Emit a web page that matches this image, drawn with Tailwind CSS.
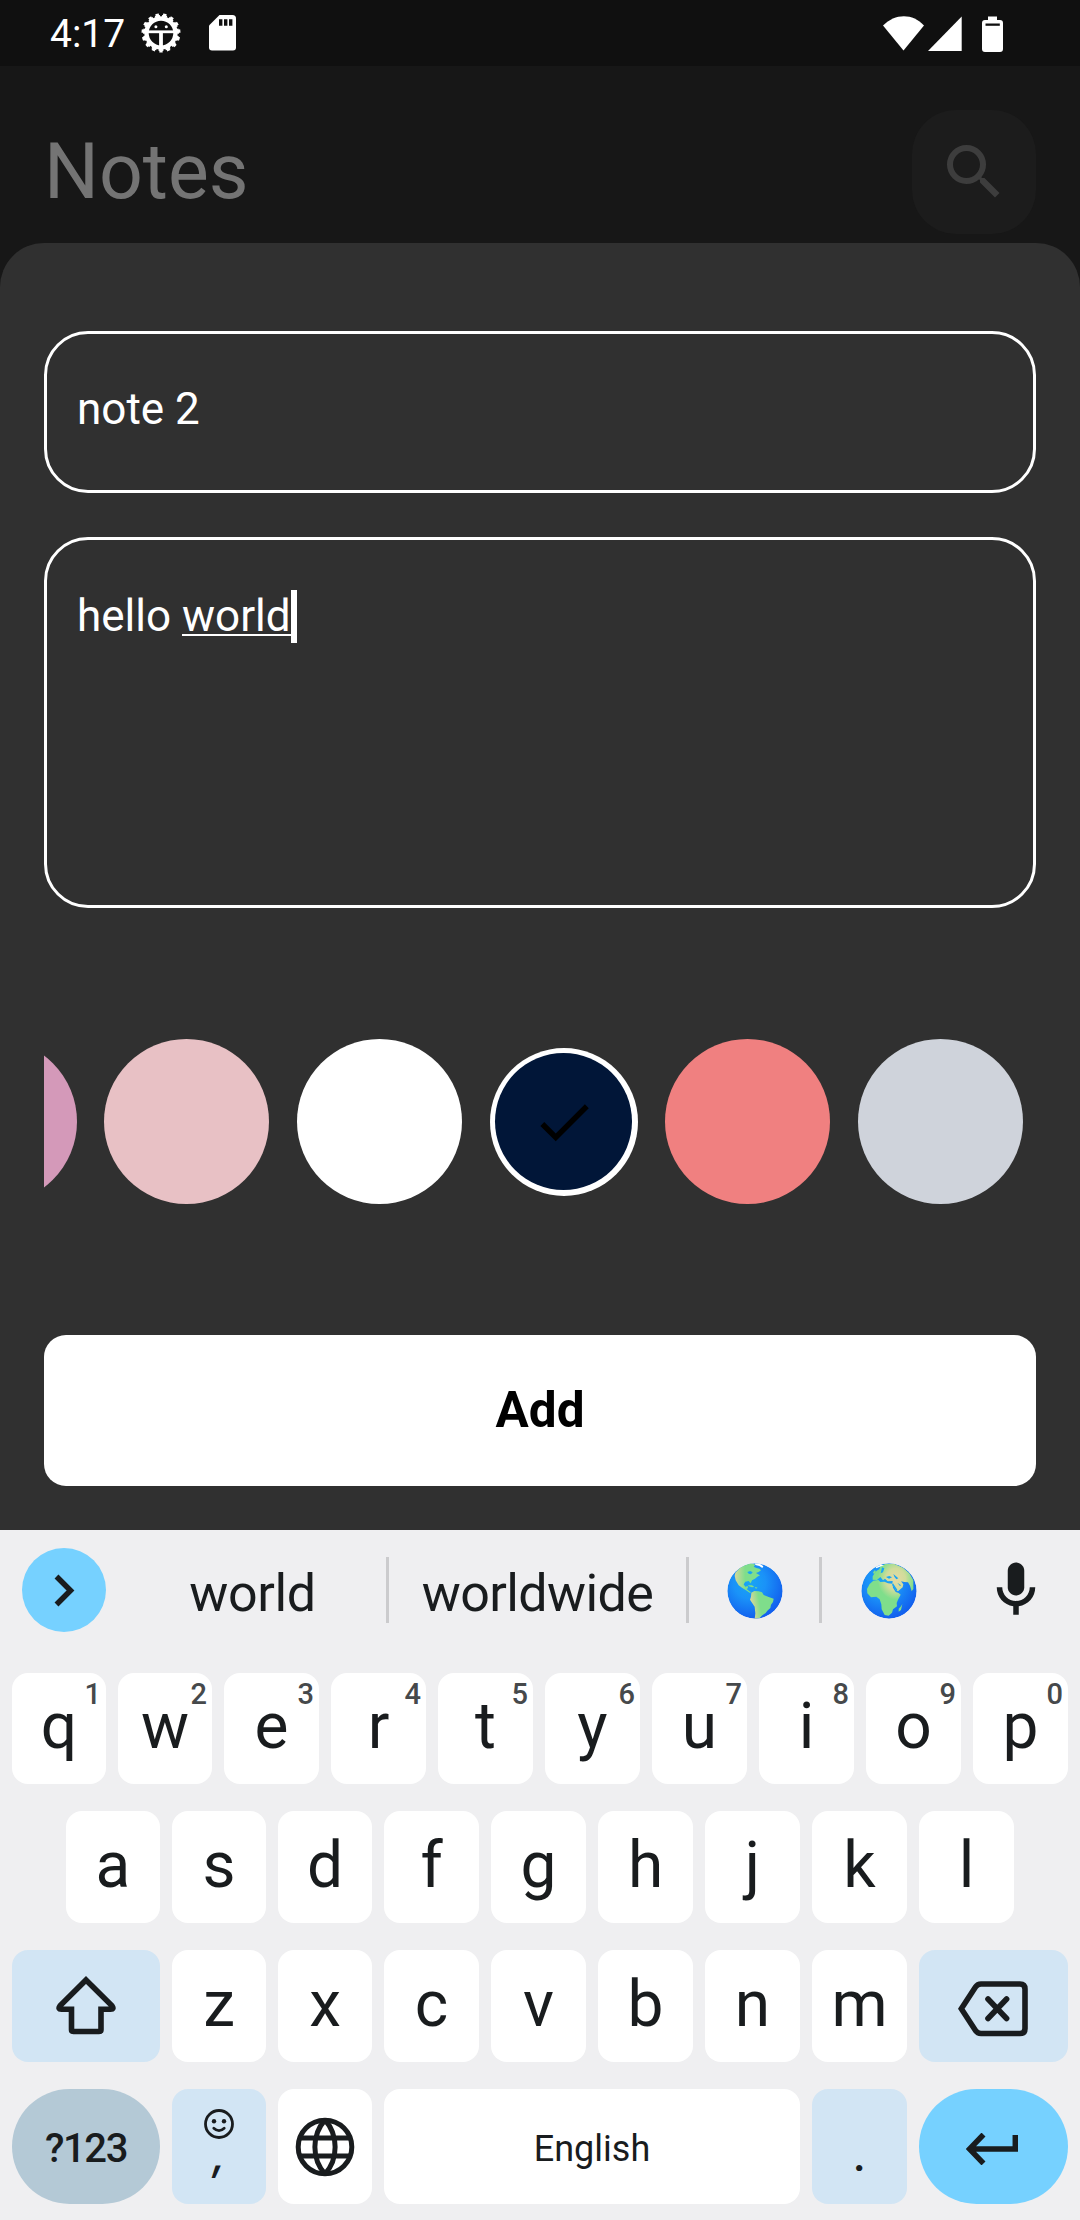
<!DOCTYPE html>
<html lang="en">
<head>
<meta charset="utf-8">
<title>Notes</title>
<script src="https://cdn.jsdelivr.net/npm/@tailwindcss/browser@4"></script>
</head>
<body class="w-[1080px] h-[2220px] overflow-hidden bg-[#171717] font-[Roboto,sans-serif] flex flex-col">

<!-- Status bar -->
<div class="h-[66px] shrink-0 bg-[#101010] flex items-center text-white">
  <div class="w-[74px] ml-[50px] pt-[3px] text-[39px] leading-none whitespace-nowrap">4:17</div>
  <svg class="ml-[17px] w-[40px] h-[40px]" viewBox="0 0 40 40" fill="none" stroke="#fff">
    <circle cx="20" cy="20" r="14.500" stroke-width="4.400"/>
    <circle cx="20" cy="20" r="16.500" stroke-width="3" pathLength="15" stroke-dasharray=".7 .3" stroke-dashoffset="-.4"/>
    <circle cx="20" cy="20" r="18.200" stroke-width="2.600" pathLength="15" stroke-dasharray=".44 .56" stroke-dashoffset="-.53"/>
    <path d="M7 18.800H33" stroke-width="2.800"/><path d="M20 19V33" stroke-width="3.800"/>
    <circle cx="14.900" cy="13.800" r="1.500" fill="#fff" stroke="none"/><circle cx="25.300" cy="13.800" r="1.500" fill="#fff" stroke="none"/>
  </svg>
  <svg class="ml-[28px] w-[27px] h-[36px]" viewBox="0 0 27 36"><path fill="#fff" d="M10.500 0H23.500Q27 0 27 3.500V32.500Q27 35.500 24 35.500H3Q0 35.500 0 32.500V10.500Z"/><path stroke="#101010" stroke-width="3.400" d="M11.700 4.200v6.600M16.700 4.200v6.600M21.700 4.200v6.600"/></svg>
  <svg class="ml-auto mr-[76px] mt-px w-[122px] h-[38px]" viewBox="0 0 122 38" fill="#fff"><path d="M1 10.500C13-2 31-2 42 10.500L21.500 35.500Z"/><path d="M46 36L79.700 1.500V36Z"/><path d="M106 1.500h9V5h3q3 0 3 3V34q0 3-3 3H103q-3 0-3-3V8q0-3 3-3h3Z"/><path fill="#101010" d="M103.500 8.500h14.300v2.300h-14.300Z"/></svg>
</div>

<!-- Header, dimmed behind the sheet -->
<div class="h-[177px] shrink-0 pl-[44px] pr-[44px] pt-[44px] flex items-start justify-between">
  <h1 class="text-[77px] leading-[124px] text-[#747474]">Notes</h1>
  <div class="w-[124px] h-[124px] rounded-[44px] bg-[#1c1c1c] flex items-center justify-center">
    <svg class="w-[72px] h-[72px]" viewBox="0 0 24 24" fill="#3d3d3d"><path d="M15.500 14h-.79l-.28-.27A6.471 6.471 0 0 0 16 9.500 6.500 6.500 0 1 0 9.500 16c1.610 0 3.090-.59 4.230-1.570l.27.28v.79l5 4.990L20.490 19l-4.990-5zm-6 0C7.010 14 5 11.990 5 9.500S7.010 5 9.500 5 14 7.010 14 9.500 11.990 14 9.500 14z"/></svg>
  </div>
</div>

<!-- Add note sheet -->
<div class="h-[1287px] shrink-0 rounded-t-[44px] bg-[#303030] px-[44px] pt-[88px] flex flex-col text-white">
  <div class="h-[162px] rounded-[44px] border-[3px] border-white pl-[30px] pt-[49px] text-[44px] leading-[52px]">note 2</div>
  <div class="mt-[44px] h-[371px] rounded-[44px] border-[3px] border-white pl-[30px] pt-[50px] flex items-start text-[44px] leading-[53px]">
    <span class="whitespace-pre">hello </span><span class="h-[46px] border-b-[2px] border-white">world</span><span class="w-[6px] h-[53px] bg-white"></span>
  </div>
  <div class="mt-[131px] h-[165px] overflow-hidden relative">
    <div class="-ml-[132px] w-max flex items-center gap-[27.500px]">
      <div class="size-[165px] rounded-full bg-[#d499b9]"></div>
      <div class="size-[165px] rounded-full bg-[#e8c1c5] -ml-[.5px] mr-[.5px]"></div>
      <div class="size-[165px] rounded-full bg-white"></div>
      <div class="size-[148px] rounded-full bg-white p-[5.500px]">
        <div class="size-full rounded-full bg-[#011638] flex items-center justify-center">
          <svg class="size-[66px]" viewBox="0 0 24 24"><path d="M9 16.170 4.830 12l-1.420 1.410L9 19 21 7l-1.410-1.410z"/></svg>
        </div>
      </div>
      <div class="size-[165px] rounded-full bg-[#f08080]"></div>
      <div class="size-[165px] rounded-full bg-[#cfd3db]"></div>
    </div>
  </div>
  <div class="mt-[131px] h-[151px] rounded-[22px] bg-white text-black text-[49.500px] font-bold flex items-center justify-center leading-none pt-px">Add</div>
</div>

<!-- Keyboard -->
<div class="h-[690px] shrink-0 bg-[#efeff1] text-[#191c1e] flex flex-col">
  <div class="h-[120px] flex items-center text-[52px] leading-none">
    <div class="ml-[22px] mr-[13px] size-[84px] shrink-0 rounded-full bg-[#76d1ff] flex items-center justify-center">
      <svg class="w-[21px] h-[33px]" viewBox="0 0 21 33" fill="none" stroke="#191c1e" stroke-width="5.500"><path d="M2.500 2.500L16.500 16.500L2.500 30.500"/></svg>
    </div>
    <div class="w-[267px] pt-[8px] text-center tracking-[-.4px]">world</div>
    <div class="w-[3px] h-[66px] bg-[#cbcbcd]"></div>
    <div class="w-[297px] pt-[8px] text-center tracking-[-.6px]">worldwide</div>
    <div class="w-[3px] h-[66px] bg-[#cbcbcd]"></div>
    <div class="w-[130px] flex justify-center">
      <svg class="ml-[2px] mt-[2px] size-[56px]" viewBox="21 23 168 168">
        <defs>
          <radialGradient id="sea" cx=".4" cy=".35" r=".65"><stop offset="0" stop-color="#18a6f4"/><stop offset=".45" stop-color="#1a92f8"/><stop offset="1" stop-color="#1260ee"/></radialGradient>
          <clipPath id="disc"><circle cx="105" cy="107" r="83"/></clipPath>
          <linearGradient id="na" x1="0" x2="1"><stop offset="0" stop-color="#d5d89c"/><stop offset=".4" stop-color="#7fde8b"/></linearGradient>
          <linearGradient id="sa" x1="0" x2="1" y1=".2"><stop offset="0" stop-color="#d9d79b"/><stop offset=".35" stop-color="#7fde8b"/></linearGradient>
          <radialGradient id="af" cx=".62" cy=".3" r=".6"><stop offset="0" stop-color="#e4d9a3"/><stop offset=".35" stop-color="#d0dc9b"/><stop offset=".65" stop-color="#7fde8b"/></radialGradient>
        </defs>
        <g clip-path="url(#disc)">
          <circle cx="105" cy="107" r="83" fill="url(#sea)"/>
          <path fill="url(#na)" d="M46 52L60 37L76 28L92 23L106 28L101 34L109 38L118 40L123 45L116 50L108 53L114 57L120 60L112 64L105 70L96 75L92 84L86 77L76 79L71 87L76 94L83 92L84 98L80 101L88 108L94 111L89 112L78 105L66 97L56 90L47 75L44 61Z"/>
          <path fill="#18a6f4" d="M82 50L91 47L98 51L93 57L86 55Z"/>
          <path fill="#7fde8b" d="M84 90L96 90L103 95L96 96L86 93ZM104 95L113 97L108 100Z"/>
          <path fill="url(#sa)" d="M94 112L103 107L116 108L126 111L131 119L146 125L161 130L159 140L153 148L151 158L142 166L137 173L127 180L119 188L104 191L106 174L104 154L96 142L90 133L93 124Z"/>
          <path fill="#fff" d="M105 24L122 27L130 33L127 38L118 32L106 29Z"/>
        </g>
      </svg>
    </div>
    <div class="w-[3px] h-[66px] bg-[#cbcbcd]"></div>
    <div class="w-[133px] flex justify-center">
      <svg class="ml-px mt-[2px] size-[56px]" viewBox="21 23 168 168">
        <g clip-path="url(#disc)">
          <circle cx="105" cy="107" r="83" fill="url(#sea)"/>
          <path fill="url(#af)" d="M60 57L68 46L76 42L79 33L94 26L120 25L147 37L166 54L178 75L178 101L173 108L168 91L162 81L151 80L141 78L148 87L146 96L132 108L126 104L116 88L117 97L125 110L134 113L140 118L132 133L128 143L129 153L117 162L114 172L104 181L92 179L83 162L82 147L77 132L67 124L51 126L40 114L39 101L47 86L58 76L73 74L79 80L91 79L102 84L115 85L116 77L101 78L93 70L87 75L79 65L69 74L56 73L56 63Z"/>
          <path fill="#18a6f4" d="M96 65L106 62L114 66L105 70ZM118 56L126 63L133 69L127 72L121 64ZM84 36L91 39L87 51L80 54ZM117 84L130 103L127 106L114 88ZM130 82L141 90L138 92Z"/>
          <path fill="#7fde8b" d="M141 153L145 146L141 164L134 169L134 160ZM57 51L63 44L66 50L60 57Z"/>
          <path fill="#fff" d="M65 35L80 28L90 30L76 35L67 39Z"/>
        </g>
      </svg>
    </div>
    <svg class="ml-[28px] size-[66px]" viewBox="0 0 24 24" fill="#191c1e"><path d="M12 14c1.660 0 3-1.340 3-3V5c0-1.660-1.340-3-3-3S9 3.340 9 5v6c0 1.660 1.340 3 3 3z"/><path d="M17 11c0 2.760-2.240 5-5 5s-5-2.240-5-5H5c0 3.530 2.610 6.430 6 6.920V21h2v-3.080c3.390-.49 6-3.390 6-6.920h-2z"/></svg>
  </div>

  <div class="mt-[23px] px-[12px] h-[111px] flex gap-[12px] text-[64px] leading-[108px] text-center">
    <div class="w-[94px] rounded-[16px] bg-white relative">q<span class="absolute right-[5px] top-[4px] text-[29px] leading-[34px] font-medium text-[#46494b]">1</span></div>
    <div class="w-[94px] rounded-[16px] bg-white relative">w<span class="absolute right-[5px] top-[4px] text-[29px] leading-[34px] font-medium text-[#46494b]">2</span></div>
    <div class="w-[95px] rounded-[16px] bg-white relative">e<span class="absolute right-[5px] top-[4px] text-[29px] leading-[34px] font-medium text-[#46494b]">3</span></div>
    <div class="w-[95px] rounded-[16px] bg-white relative">r<span class="absolute right-[5px] top-[4px] text-[29px] leading-[34px] font-medium text-[#46494b]">4</span></div>
    <div class="w-[95px] rounded-[16px] bg-white relative">t<span class="absolute right-[5px] top-[4px] text-[29px] leading-[34px] font-medium text-[#46494b]">5</span></div>
    <div class="w-[95px] rounded-[16px] bg-white relative">y<span class="absolute right-[5px] top-[4px] text-[29px] leading-[34px] font-medium text-[#46494b]">6</span></div>
    <div class="w-[95px] rounded-[16px] bg-white relative">u<span class="absolute right-[5px] top-[4px] text-[29px] leading-[34px] font-medium text-[#46494b]">7</span></div>
    <div class="w-[95px] rounded-[16px] bg-white relative">i<span class="absolute right-[5px] top-[4px] text-[29px] leading-[34px] font-medium text-[#46494b]">8</span></div>
    <div class="w-[95px] rounded-[16px] bg-white relative">o<span class="absolute right-[5px] top-[4px] text-[29px] leading-[34px] font-medium text-[#46494b]">9</span></div>
    <div class="w-[95px] rounded-[16px] bg-white relative">p<span class="absolute right-[5px] top-[4px] text-[29px] leading-[34px] font-medium text-[#46494b]">0</span></div>
  </div>

  <div class="mt-[27px] pl-[66px] h-[112px] flex gap-[12px] text-[64px] leading-[110px] text-center">
    <div class="w-[94px] rounded-[16px] bg-white">a</div>
    <div class="w-[94px] rounded-[16px] bg-white">s</div>
    <div class="w-[94px] rounded-[16px] bg-white">d</div>
    <div class="w-[95px] rounded-[16px] bg-white">f</div>
    <div class="w-[95px] rounded-[16px] bg-white">g</div>
    <div class="w-[95px] rounded-[16px] bg-white">h</div>
    <div class="w-[95px] rounded-[16px] bg-white">j</div>
    <div class="w-[95px] rounded-[16px] bg-white">k</div>
    <div class="w-[95px] rounded-[16px] bg-white">l</div>
  </div>

  <div class="mt-[27px] px-[12px] h-[112px] flex gap-[12px] text-[64px] leading-[110px] text-center">
    <div class="w-[148px] rounded-[16px] bg-[#d2e5f4] flex items-center justify-center">
      <svg class="w-[64px] h-[62px] mb-[2px]" viewBox="0 0 64 62" fill="none" stroke="#191c1e" stroke-width="5.600"><path d="M32 6L58 31.800Q60.500 35.200 56.500 35.200H47V55.500q0 2-2 2H19.500q-2 0-2-2V35.200H7.500Q3.500 35.200 6 31.800Z"/></svg>
    </div>
    <div class="w-[94px] rounded-[16px] bg-white">z</div>
    <div class="w-[94px] rounded-[16px] bg-white">x</div>
    <div class="w-[95px] rounded-[16px] bg-white">c</div>
    <div class="w-[95px] rounded-[16px] bg-white">v</div>
    <div class="w-[95px] rounded-[16px] bg-white">b</div>
    <div class="w-[95px] rounded-[16px] bg-white">n</div>
    <div class="w-[95px] rounded-[16px] bg-white">m</div>
    <div class="w-[149px] rounded-[16px] bg-[#d2e5f4] flex items-center justify-center">
      <svg class="w-[70px] h-[56px] mt-[5px] mr-[2px]" viewBox="0 0 70 56" fill="none" stroke="#191c1e" stroke-width="5.600"><path d="M3.300 27.800L17.500 6Q19.500 3 23 3H62Q67 3 67 8V47.500Q67 52.500 62 52.500H23Q19.500 52.500 17.500 49.500Z"/><path stroke-linecap="round" d="M30 18L48.600 37.500M48.600 18L30 37.500"/></svg>
    </div>
  </div>

  <div class="mt-[27px] px-[12px] h-[115px] flex gap-[12px] text-center">
    <div class="w-[148px] rounded-[57.500px] bg-[#b4c9d6] text-[40px] font-medium leading-[120px] tracking-[-1.400px]">?123</div>
    <div class="w-[94px] rounded-[16px] bg-[#d2e5f4] flex flex-col items-center pt-[20px]">
      <svg class="size-[30px]" viewBox="0 0 30 30" fill="none" stroke="#191c1e" stroke-width="2.800"><circle cx="15" cy="15" r="13.500"/><circle cx="10" cy="12.300" r="2.200" fill="#191c1e" stroke="none"/><circle cx="20" cy="12.300" r="2.200" fill="#191c1e" stroke="none"/><path stroke-linecap="round" d="M9.800 19.300Q15 24 20.200 19.300"/></svg>
      <span class="text-[44px] leading-[40px] font-[Inter,sans-serif] font-medium italic mt-[-5px]">,</span>
    </div>
    <div class="w-[94px] rounded-[16px] bg-white flex items-center justify-center">
      <svg class="size-[60px]" viewBox="-30 -30 60 60" fill="none" stroke="#191c1e" stroke-width="5"><circle r="26.800"/><path d="M-26-9H26M-26 9H26M0-27C-13.500-12-13.500 12 0 27M0-27C13.500-12 13.500 12 0 27"/></svg>
    </div>
    <div class="w-[416px] rounded-[16px] bg-white text-[36px] leading-[120px]">English</div>
    <div class="w-[95px] rounded-[16px] bg-[#d2e5f4] text-[46px] leading-[132px] font-medium">.</div>
    <div class="w-[149px] rounded-[57.500px] bg-[#76d1ff] flex items-center justify-center">
      <svg class="w-[52px] h-[32px] mt-[5px] mr-[3px]" viewBox="0 0 52 32" fill="none" stroke="#191c1e" stroke-width="5.500"><path d="M49.300 2V16H4M17.500 1.500L3.500 16L17.500 30.500"/></svg>
    </div>
  </div>
</div>
</body>
</html>
